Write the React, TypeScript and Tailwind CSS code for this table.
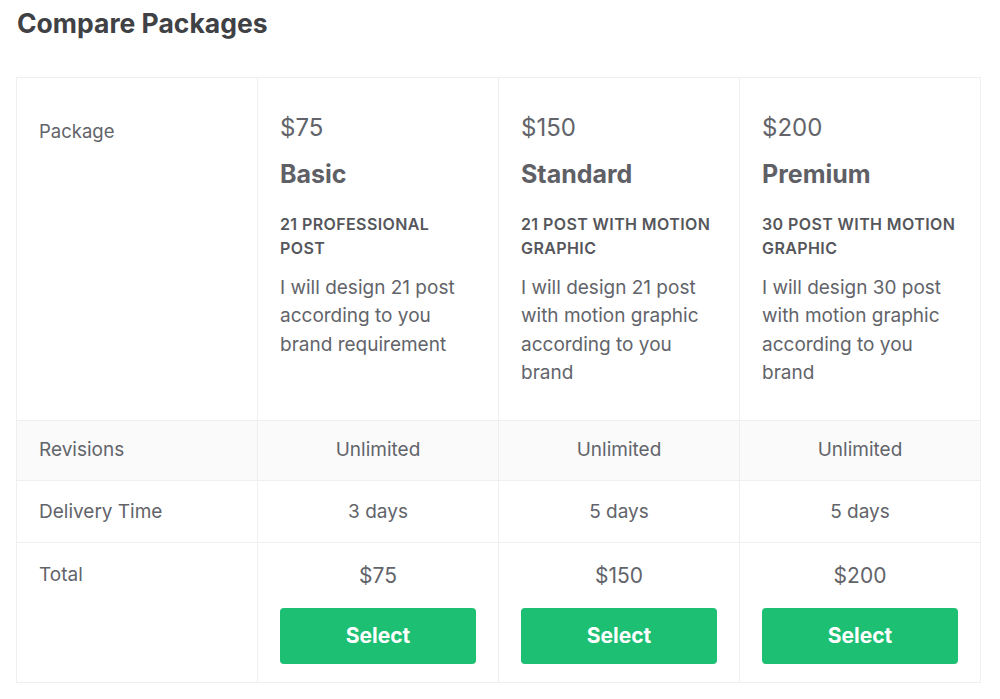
import React from "react";

const packages = [
  {
    price: "$75",
    name: "Basic",
    title: "21 PROFESSIONAL POST",
    desc: "I will design 21 post according to you brand requirement",
    revisions: "Unlimited",
    delivery: "3 days",
  },
  {
    price: "$150",
    name: "Standard",
    title: "21 POST WITH MOTION GRAPHIC",
    desc: "I will design 21 post with motion graphic according to you brand",
    revisions: "Unlimited",
    delivery: "5 days",
  },
  {
    price: "$200",
    name: "Premium",
    title: "30 POST WITH MOTION GRAPHIC",
    desc: "I will design 30 post with motion graphic according to you brand",
    revisions: "Unlimited",
    delivery: "5 days",
  },
];

function App() {
  return (
    <div className="min-h-[699px] bg-white px-4 font-['Inter',sans-serif] text-[#62646a]">
      <h1 className="pt-[7px] pl-[1px] text-[26.5px] leading-[32px] font-bold text-[#404145]">
        Compare Packages
      </h1>
      <table className="mt-[38px] w-[964px] table-fixed border-collapse border border-[#efeff0]">
        <tbody>
          <tr>
            <td className="w-[241px] border border-[#efeff0] px-[22px] pt-[41px] align-top text-[18.5px] leading-[24px]">
              Package
            </td>
            {packages.map((p) => (
              <td
                key={p.name}
                className="w-[241px] border border-[#efeff0] px-[22px] pt-[34px] pb-[32px] align-top"
              >
                <div className="text-[24px] leading-[32px]">{p.price}</div>
                <div className="mt-[14px] text-[25px] leading-[32px] font-bold text-[#5f6066]">
                  {p.name}
                </div>
                <div className="mt-[22px] text-[16px] leading-[24px] font-semibold tracking-[0.4px] text-[#55565b]">
                  {p.title}
                </div>
                <div className="mt-[14px] text-[19px] leading-[28.4px]">
                  {p.desc}
                </div>
              </td>
            ))}
          </tr>
          <tr className="bg-[#fafafa]">
            <td className="h-[60px] border border-[#efeff0] px-[22px] text-[19px]">
              Revisions
            </td>
            {packages.map((p) => (
              <td
                key={p.name}
                className="border border-[#efeff0] text-center text-[19px]"
              >
                {p.revisions}
              </td>
            ))}
          </tr>
          <tr>
            <td className="h-[62px] border border-[#efeff0] px-[22px] pt-[2px] text-[19px]">
              Delivery Time
            </td>
            {packages.map((p) => (
              <td
                key={p.name}
                className="border border-[#efeff0] pt-[2px] text-center text-[19px]"
              >
                {p.delivery}
              </td>
            ))}
          </tr>
          <tr>
            <td className="border border-[#efeff0] px-[22px] pt-[20px] align-top text-[19px] leading-[24px]">
              Total
            </td>
            {packages.map((p) => (
              <td
                key={p.name}
                className="border border-[#efeff0] px-[22px] pt-[18px] pb-[18px] align-top"
              >
                <div className="text-center text-[21px] leading-[30px]">
                  {p.price}
                </div>
                <button className="mt-[17px] h-[56px] w-full rounded-[4px] bg-[#1dbf73] text-[21px] font-bold text-white">
                  Select
                </button>
              </td>
            ))}
          </tr>
        </tbody>
      </table>
    </div>
  );
}

export default App;
